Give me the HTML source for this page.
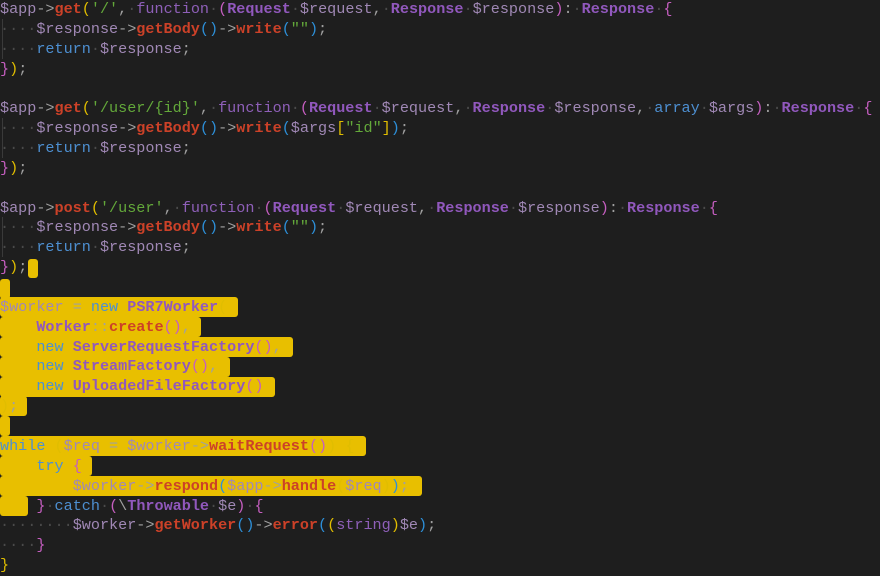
<!DOCTYPE html>
<html><head><meta charset="utf-8"><style>
body{margin:0;width:880px;height:576px;background:#1e1e1e;overflow:hidden;position:relative;font-family:"Liberation Mono",monospace;font-size:15.15px;}
.l{position:absolute;left:0;height:20px;line-height:20px;white-space:pre;color:#a0a0a0}
.sel{position:absolute;background:#e8bf00;border-radius:3px}
.v{color:#a088b5}.f{color:#cc4128;font-weight:bold}.c{color:#9158bd;font-weight:bold}
.k{color:#8e5fb8}.b{color:#4d8fd1}.s{color:#63a83a}.o{color:#a0a0a0}
.y{color:#e0bd00}.m{color:#c55ec0}.u{color:#2d8fd8}.d{color:#4a4a4a}
.g{position:absolute;left:2px;width:1px;background:#3a3a3a}
</style></head><body>
<div class="g" style="top:19px;height:40px"></div>
<div class="g" style="top:118px;height:40px"></div>
<div class="g" style="top:217px;height:40px"></div>
<div class="sel" style="left:28px;top:259px;width:10px;height:19px"></div>
<div class="sel" style="left:0;top:279px;width:10px;height:20px"></div>
<div class="sel" style="left:0;top:297px;width:238px;height:20px"></div>
<div class="sel" style="left:0;top:317px;width:201px;height:20px"></div>
<div class="sel" style="left:0;top:337px;width:293px;height:20px"></div>
<div class="sel" style="left:0;top:357px;width:230px;height:20px"></div>
<div class="sel" style="left:0;top:377px;width:275px;height:20px"></div>
<div class="sel" style="left:0;top:396px;width:27px;height:20px"></div>
<div class="sel" style="left:0;top:416px;width:10px;height:20px"></div>
<div class="sel" style="left:0;top:436px;width:366px;height:20px"></div>
<div class="sel" style="left:0;top:456px;width:92px;height:20px"></div>
<div class="sel" style="left:0;top:476px;width:422px;height:20px"></div>
<div class="sel" style="left:0;top:496px;width:28px;height:20px"></div>

<div class="l" style="top:-1px"><span class="v">$app</span>-&gt;<span class="f">get</span><span class="y">(</span><span class="s">'/'</span>,<span class="d">·</span><span class="k">function</span><span class="d">·</span><span class="m">(</span><span class="c">Request</span><span class="d">·</span><span class="v">$request</span>,<span class="d">·</span><span class="c">Response</span><span class="d">·</span><span class="v">$response</span><span class="m">)</span>:<span class="d">·</span><span class="c">Response</span><span class="d">·</span><span class="m">{</span></div>
<div class="l" style="top:18.86px"><span class="d">····</span><span class="v">$response</span>-&gt;<span class="f">getBody</span><span class="u">()</span>-&gt;<span class="f">write</span><span class="u">(</span><span class="s">""</span><span class="u">)</span>;</div>
<div class="l" style="top:38.72px"><span class="d">····</span><span class="b">return</span><span class="d">·</span><span class="v">$response</span>;</div>
<div class="l" style="top:58.58px"><span class="m">}</span><span class="y">)</span>;</div>

<div class="l" style="top:98.3px"><span class="v">$app</span>-&gt;<span class="f">get</span><span class="y">(</span><span class="s">'/user/{id}'</span>,<span class="d">·</span><span class="k">function</span><span class="d">·</span><span class="m">(</span><span class="c">Request</span><span class="d">·</span><span class="v">$request</span>,<span class="d">·</span><span class="c">Response</span><span class="d">·</span><span class="v">$response</span>,<span class="d">·</span><span class="b">array</span><span class="d">·</span><span class="v">$args</span><span class="m">)</span>:<span class="d">·</span><span class="c">Response</span><span class="d">·</span><span class="m">{</span></div>
<div class="l" style="top:118.16px"><span class="d">····</span><span class="v">$response</span>-&gt;<span class="f">getBody</span><span class="u">()</span>-&gt;<span class="f">write</span><span class="u">(</span><span class="v">$args</span><span class="y">[</span><span class="s">"id"</span><span class="y">]</span><span class="u">)</span>;</div>
<div class="l" style="top:138.02px"><span class="d">····</span><span class="b">return</span><span class="d">·</span><span class="v">$response</span>;</div>
<div class="l" style="top:157.88px"><span class="m">}</span><span class="y">)</span>;</div>

<div class="l" style="top:197.6px"><span class="v">$app</span>-&gt;<span class="f">post</span><span class="y">(</span><span class="s">'/user'</span>,<span class="d">·</span><span class="k">function</span><span class="d">·</span><span class="m">(</span><span class="c">Request</span><span class="d">·</span><span class="v">$request</span>,<span class="d">·</span><span class="c">Response</span><span class="d">·</span><span class="v">$response</span><span class="m">)</span>:<span class="d">·</span><span class="c">Response</span><span class="d">·</span><span class="m">{</span></div>
<div class="l" style="top:217.46px"><span class="d">····</span><span class="v">$response</span>-&gt;<span class="f">getBody</span><span class="u">()</span>-&gt;<span class="f">write</span><span class="u">(</span><span class="s">""</span><span class="u">)</span>;</div>
<div class="l" style="top:237.32px"><span class="d">····</span><span class="b">return</span><span class="d">·</span><span class="v">$response</span>;</div>
<div class="l" style="top:257.18px"><span class="m">}</span><span class="y">)</span>;</div>

<div class="l" style="top:296.9px"><span class="v">$worker</span> = <span class="b">new</span> <span class="c">PSR7Worker</span><span class="y">(</span></div>
<div class="l" style="top:316.76px">    <span class="c">Worker</span>::<span class="f">create</span><span class="m">()</span>,</div>
<div class="l" style="top:336.62px">    <span class="b">new</span> <span class="c">ServerRequestFactory</span><span class="m">()</span>,</div>
<div class="l" style="top:356.48px">    <span class="b">new</span> <span class="c">StreamFactory</span><span class="m">()</span>,</div>
<div class="l" style="top:376.34px">    <span class="b">new</span> <span class="c">UploadedFileFactory</span><span class="m">()</span></div>
<div class="l" style="top:396.2px"><span class="y">)</span>;</div>

<div class="l" style="top:435.92px"><span class="b">while</span> <span class="y">(</span><span class="v">$req</span> = <span class="v">$worker</span>-&gt;<span class="f">waitRequest</span><span class="m">()</span><span class="y">)</span> <span class="y">{</span></div>
<div class="l" style="top:455.78px">    <span class="b">try</span> <span class="m">{</span></div>
<div class="l" style="top:475.64px">        <span class="v">$worker</span>-&gt;<span class="f">respond</span><span class="u">(</span><span class="v">$app</span>-&gt;<span class="f">handle</span><span class="y">(</span><span class="v">$req</span><span class="y">)</span><span class="u">)</span>;</div>
<div class="l" style="top:495.5px">    <span class="m">}</span><span class="d">·</span><span class="b">catch</span><span class="d">·</span><span class="m">(</span>\<span class="c">Throwable</span><span class="d">·</span><span class="v">$e</span><span class="m">)</span><span class="d">·</span><span class="m">{</span></div>
<div class="l" style="top:515.36px"><span class="d">········</span><span class="v">$worker</span>-&gt;<span class="f">getWorker</span><span class="u">()</span>-&gt;<span class="f">error</span><span class="u">(</span><span class="y">(</span><span class="k">string</span><span class="y">)</span><span class="v">$e</span><span class="u">)</span>;</div>
<div class="l" style="top:535.22px"><span class="d">····</span><span class="m">}</span></div>
<div class="l" style="top:555.08px"><span class="y">}</span></div>
</body></html>
